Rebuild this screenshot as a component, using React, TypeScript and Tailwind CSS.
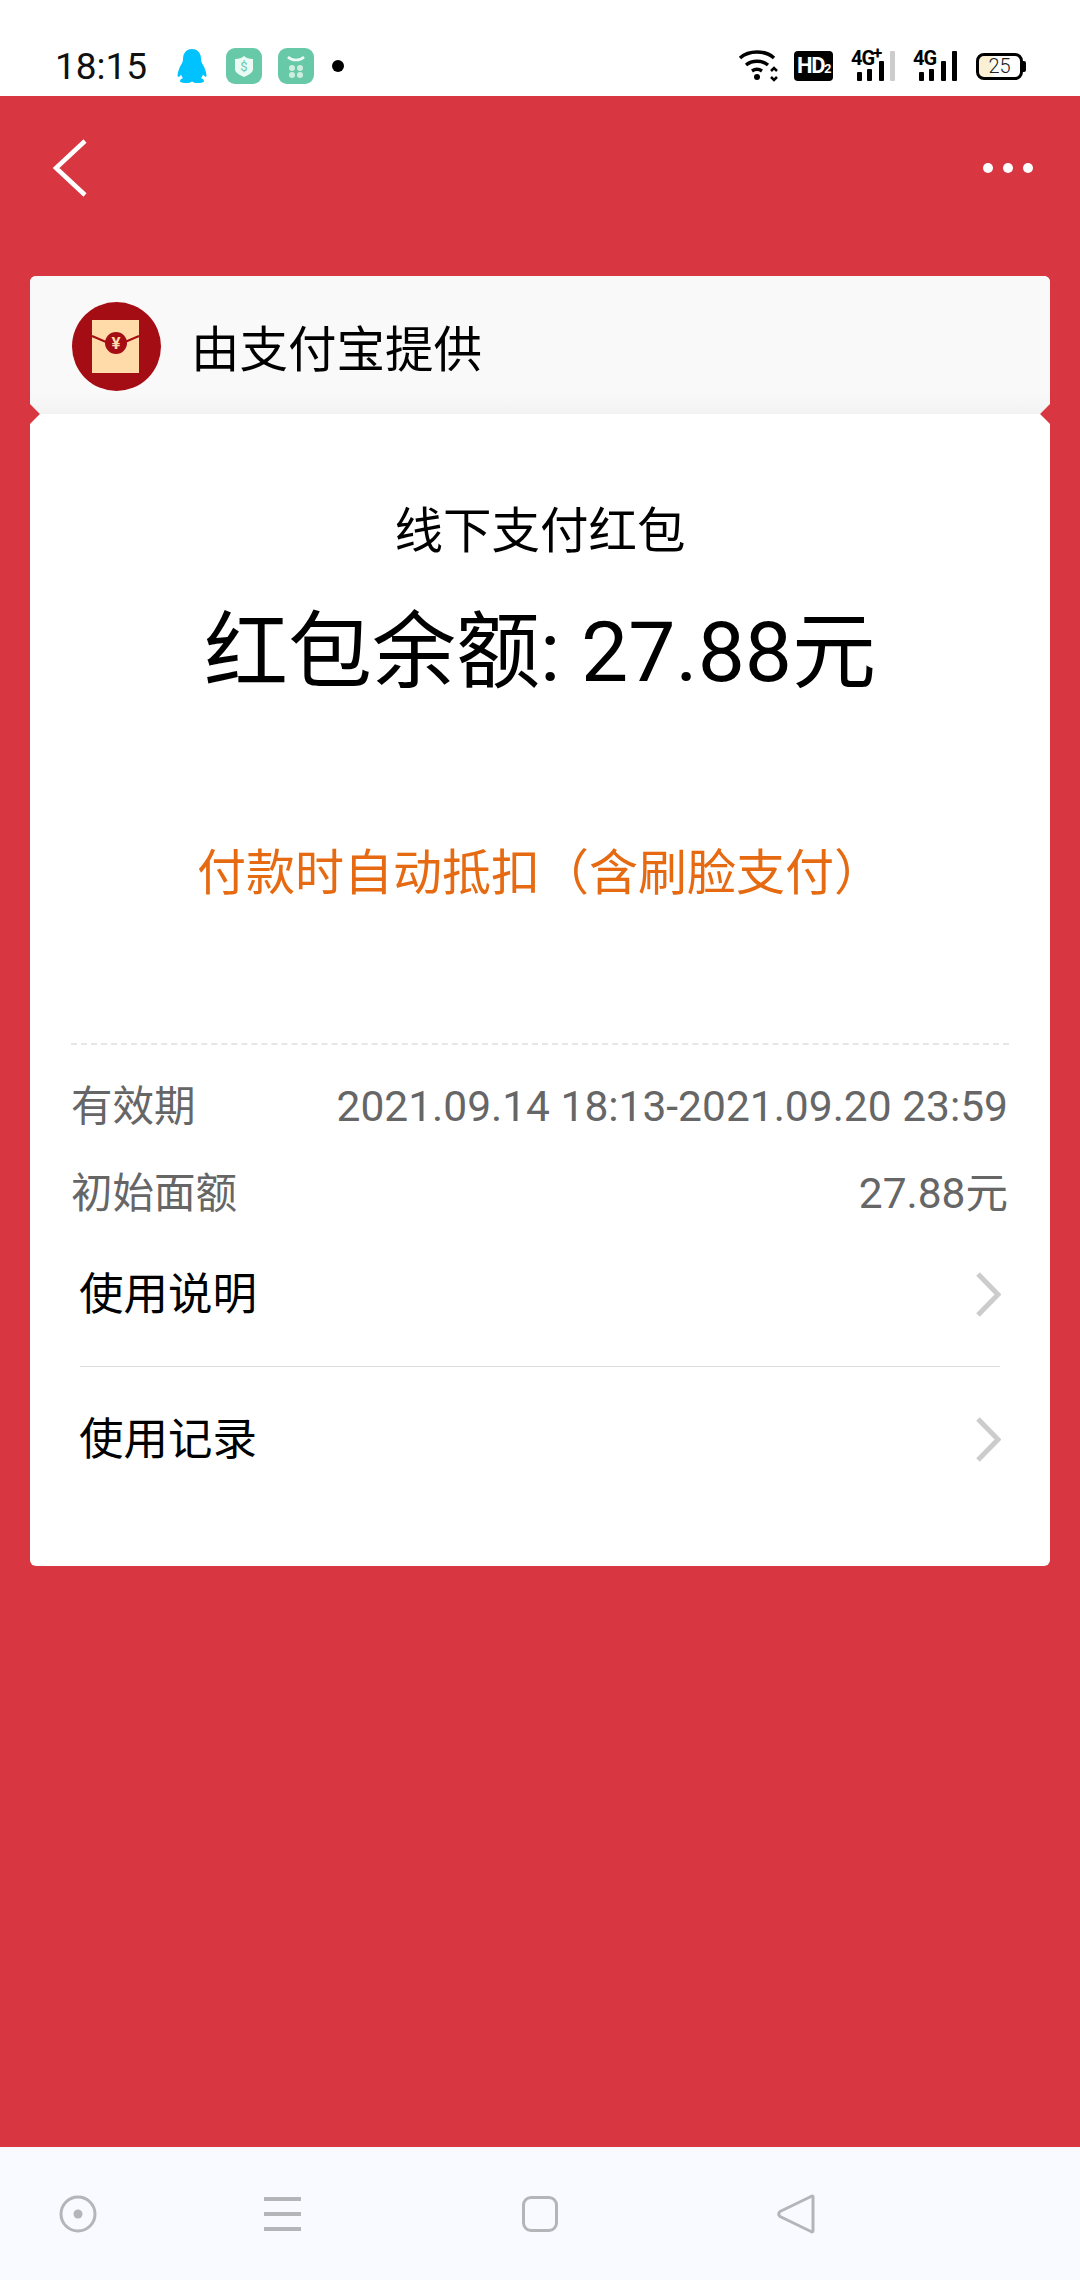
import * as React from "react";

const fontStack = { fontFamily: 'Roboto, "Noto Sans CJK SC", sans-serif' };

function QQIcon() {
  return (
    <svg width="30" height="36" viewBox="0 0 30 36">
      <path
        d="M15 1c6 0 9 4.500 9 10 0 2 .5 3 1.500 5 2 3.500 4 8 4 12 0 1.500-1.500 1-3.500-1.500-.5 1.500-1 2.500-2 3.500 2 .8 3 1.800 3 3.200 0 1.200-3 1.800-6 1.800-2.500 0-4.500-.5-6-1.500-1.500 1-3.500 1.500-6 1.500-3 0-6-.6-6-1.800 0-1.400 1-2.400 3-3.200-1-1-1.500-2-2-3.500C3 29 1 29.500 .5 28c0-4 2-8.500 4-12 1-2 1.500-3 1.500-5C6 5.500 9 1 15 1z"
        fill="#00c2ff"
      />
    </svg>
  );
}

function ShieldApp() {
  return (
    <svg width="36" height="36" viewBox="0 0 36 36">
      <rect width="36" height="36" rx="9" fill="#67c9a8" />
      <path d="M9 11c4 0 7-1 9-3 2 2 5 3 9 3v10c0 4-5 6-9 8-4-2-9-4-9-8z" fill="#ecfaf4" />
      <text x="18" y="23" textAnchor="middle" fontSize="13" fill="#67c9a8" fontFamily="Roboto, sans-serif">
        $
      </text>
    </svg>
  );
}

function StoreApp() {
  return (
    <svg width="36" height="36" viewBox="0 0 36 36">
      <rect width="36" height="36" rx="9" fill="#67c9a8" />
      <path d="M10 9c4 4 12 4 16 0" fill="none" stroke="#ecfaf4" strokeWidth="2.500" />
      <circle cx="14" cy="20" r="3" fill="#cdeee0" />
      <circle cx="22" cy="20" r="3" fill="#cdeee0" />
      <circle cx="14" cy="27" r="3" fill="#cdeee0" />
      <circle cx="22" cy="27" r="3" fill="#cdeee0" />
    </svg>
  );
}

function WifiIcon() {
  return (
    <svg width="42" height="32" viewBox="0 0 42 32" fill="none" stroke="#000" strokeWidth="3.500">
      <path d="M2 8c9-8 25-8 34 0" />
      <path d="M8 15c6-5 16-5 22 0" />
      <path d="M14 21c3-2 7-2 10 0" />
      <circle cx="19" cy="27" r="3" fill="#000" stroke="none" />
      <path d="M33 21l3-3 3 3M33 27l3 3 3-3" strokeWidth="2.500" />
    </svg>
  );
}

function SignalIcon({ plus, lastDim }: { plus?: boolean; lastDim?: boolean }) {
  return (
    <div className="relative h-[30px] w-[44px]">
      <span className="absolute left-0 top-[-3px] text-[20px] font-bold leading-[20px] tracking-[-1px] text-black">4G</span>
      {plus && <span className="absolute left-[22px] top-[-6px] text-[17px] font-bold leading-[17px] text-black">+</span>}
      <div className="absolute bottom-0 left-[6px] h-[9px] w-[5px] rounded-[1px] bg-black" />
      <div className="absolute bottom-0 left-[16px] h-[12px] w-[5px] rounded-[1px] bg-black" />
      <div className="absolute bottom-0 left-[28px] h-[20px] w-[5px] rounded-[1px] bg-black" />
      <div className={`absolute bottom-0 left-[39px] h-[30px] w-[5px] rounded-[1px] ${lastDim ? "bg-[#cccccc]" : "bg-black"}`} />
    </div>
  );
}

function StatusBar() {
  return (
    <div className="flex h-[96px] items-center justify-between bg-white pl-[55px] pr-[54px] pt-[36px]">
      <div className="flex items-center">
        <span className="w-[122px] text-[37px] leading-none text-[#111]">18:15</span>
        <QQIcon />
        <div className="ml-[19px]">
          <ShieldApp />
        </div>
        <div className="ml-[16px]">
          <StoreApp />
        </div>
        <div className="ml-[18px] h-[12px] w-[12px] rounded-full bg-black" />
      </div>
      <div className="flex items-center">
        <WifiIcon />
        <div className="ml-[14px] flex h-[30px] w-[39px] items-center justify-center rounded-[4px] bg-black text-[22px] font-bold leading-none tracking-[-1.500px] text-white">
          HD<span className="mt-[4px] text-[13px]">2</span>
        </div>
        <div className="ml-[18px]">
          <SignalIcon plus lastDim />
        </div>
        <div className="ml-[18px]">
          <SignalIcon />
        </div>
        <div className="relative ml-[19px] mr-[3px] flex h-[27px] w-[47px] items-center justify-center rounded-[8px] border-[3px] border-black bg-[linear-gradient(90deg,#fbf0d4_0%,#fbf0d4_25%,#ffffff_40%)] text-[20px] font-light leading-none text-[#222]">
          25
          <div className="absolute right-[-6px] top-[5px] h-[11px] w-[3px] rounded-r-[2px] bg-black" />
        </div>
      </div>
    </div>
  );
}

function EnvelopeLogo() {
  return (
    <svg width="89" height="89" viewBox="0 0 89 89" className="shrink-0">
      <circle cx="44.500" cy="44.500" r="44.500" fill="#a50d14" />
      <rect x="20" y="18" width="47" height="53" fill="#fedba8" />
      <path d="M20 34l14 6M67 34l-14 6" stroke="#a50d14" strokeWidth="2" />
      <circle cx="44" cy="41" r="11" fill="#a50d14" />
      <text x="44" y="47" textAnchor="middle" fontSize="17" fontWeight="700" fill="#fedba8" fontFamily="Roboto, sans-serif">
        ¥
      </text>
    </svg>
  );
}

function InfoRow({ label, value, className }: { label: string; value: string; className?: string }) {
  return (
    <div className={`flex items-center justify-between text-[#666666] ${className ?? ""}`}>
      <span className="ml-[-1px] text-[41.500px] leading-[60px]">{label}</span>
      <span className="text-[42.500px] leading-[60px]">{value}</span>
    </div>
  );
}

function RowChevron() {
  return (
    <svg width="25" height="45" viewBox="0 0 25 45" fill="none" stroke="#cccccc" strokeWidth="5" className="mb-[2px] mr-[-1px]">
      <path d="M2 2l20 20.500L2 43" />
    </svg>
  );
}

function LinkRow({ label, className }: { label: string; className: string }) {
  return (
    <div className={`flex items-center justify-between ${className}`}>
      <span className="ml-[-1px] text-[44.500px] leading-none text-black">{label}</span>
      <RowChevron />
    </div>
  );
}

function NavBar() {
  return (
    <div className="flex h-[133px] items-center bg-[#f9faff] pl-[59px] pt-[1px]">
      <svg width="38" height="38" viewBox="0 0 38 38" fill="none" stroke="#b4b5b9" strokeWidth="3">
        <circle cx="19" cy="19" r="17" />
        <circle cx="19" cy="19" r="4.500" fill="#b4b5b9" stroke="none" />
      </svg>
      <div className="ml-[167px] flex h-[34px] w-[37px] flex-col justify-between">
        <div className="h-[4px] bg-[#b4b5b9]" />
        <div className="h-[4px] bg-[#b4b5b9]" />
        <div className="h-[4px] bg-[#b4b5b9]" />
      </div>
      <div className="ml-[221px] h-[36px] w-[36px] rounded-[9px] border-[3px] border-[#b4b5b9]" />
      <svg width="38" height="42" viewBox="0 0 38 42" fill="none" stroke="#b4b5b9" strokeWidth="3" strokeLinejoin="round" className="ml-[219px]">
        <path d="M35 3c.8 0 1 .5 1 1v34c0 .8-1 1.300-2 .5L3 23.500c-1.500-1.500-1.500-3.500 0-5L34 3.500z" />
      </svg>
    </div>
  );
}

export default function App() {
  return (
    <div className="flex h-[2280px] w-[1080px] flex-col overflow-hidden" style={fontStack}>
      <StatusBar />
      <div className="flex-1 bg-[#d83742] px-[30px]">
        <div className="flex h-[180px] items-start justify-between pt-[43px]">
          <svg width="36" height="58" viewBox="0 0 36 58" fill="none" stroke="#ffffff" strokeWidth="4.500" className="ml-[22px]">
            <path d="M33 2L4 29l29 27" />
          </svg>
          <div className="mr-[17px] mt-[24px] flex gap-[10px]">
            <div className="h-[10px] w-[10px] rounded-full bg-white" />
            <div className="h-[10px] w-[10px] rounded-full bg-white" />
            <div className="h-[10px] w-[10px] rounded-full bg-white" />
          </div>
        </div>

        <div className="relative overflow-hidden rounded-[6px] bg-white">
          <div className="flex h-[138px] items-center bg-[linear-gradient(180deg,#f9f9fa_0%,#f9f9fa_85%,#f2f2f3_100%)] pl-[42px] pt-[2px]">
            <EnvelopeLogo />
            <span className="ml-[30px] mt-[10px] text-[48.500px] leading-none text-black">由支付宝提供</span>
          </div>

          <div className="absolute left-[-7px] top-[131px] h-[14px] w-[14px] rotate-45 bg-[#d83742]" />
          <div className="absolute right-[-7px] top-[131px] h-[14px] w-[14px] rotate-45 bg-[#d83742]" />

          <div className="flex flex-col items-center pt-[84px]">
            <div className="text-[48.500px] leading-[68px] text-black">线下支付红包</div>
            <div className="mt-[35px] text-[84px] leading-[104px] text-black">红包余额: 27.88元</div>
            <div className="mt-[135px] text-[49px] leading-[68px] text-[#e66a12]">付款时自动抵扣（含刷脸支付）</div>
          </div>

          <div className="mx-[41px] mt-[135px] border-t-2 border-dashed border-[#e6e6e6]" />

          <div className="px-[42px] pt-[32px]">
            <InfoRow label="有效期" value="2021.09.14 18:13-2021.09.20 23:59" />
            <InfoRow label="初始面额" value="27.88元" className="mt-[27px]" />
          </div>

          <div className="px-[50px] pb-[53px]">
            <LinkRow label="使用说明" className="h-[142px]" />
            <div className="border-t border-[#dddddd]" />
            <LinkRow label="使用记录" className="h-[146px]" />
          </div>
        </div>
      </div>
      <NavBar />
    </div>
  );
}
